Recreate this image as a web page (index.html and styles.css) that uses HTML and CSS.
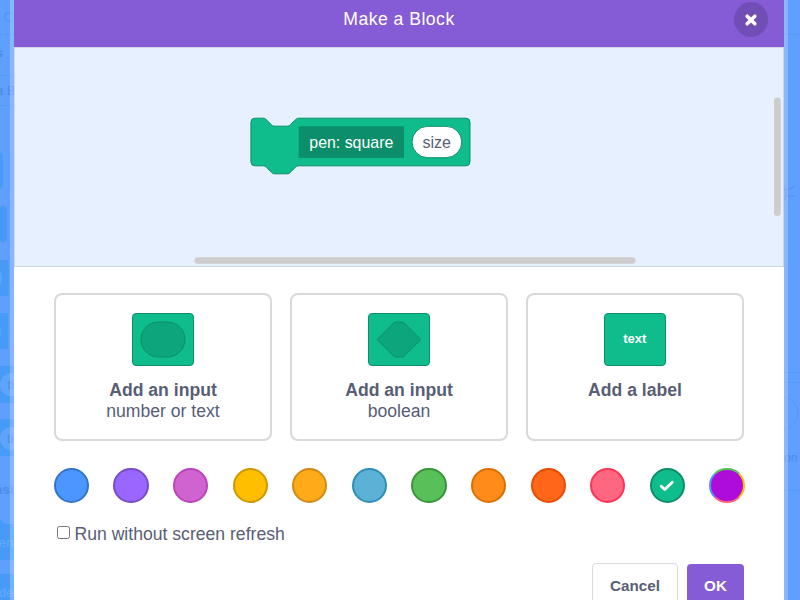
FILE: index.html
```
<!DOCTYPE html>
<html lang="en">
<head>
<meta charset="utf-8">
<title>Make a Block</title>
<link rel="stylesheet" href="styles.css">
</head>
<body>
<svg class="backdrop" width="800" height="600" viewBox="0 0 800 600" aria-hidden="true">
  <g class="dim-block">
    <path d="M-4 153H0Q3 153 3 157V185Q3 189 0 189H-4Z"/>
    <rect x="-20" y="206" width="27" height="36" rx="3"/>
    <rect x="-20" y="260" width="28.5" height="36" rx="3"/>
    <rect x="-20" y="313" width="28" height="36" rx="3"/>
    <rect x="-20" y="366" width="40" height="37"/>
    <rect x="-20" y="419" width="40" height="37"/>
    <path d="M0 519L5 524H20V560H0Z"/>
    <rect x="-20" y="574" width="40" height="30"/>
  </g>
  <g class="dim-input">
    <circle cx="-13" cy="278" r="15"/>
    <circle cx="-14" cy="331" r="15"/>
    <rect x="0" y="373" width="40" height="23" rx="11.5"/>
    <rect x="0" y="427" width="40" height="23" rx="11.5"/>
  </g>
  <g class="dim-line">
    <path d="M0 34.5H14M0 75.5H14M0 105.5H14M784 34.5H800M784 372.5H800M784 382.5H800M784 490.5H800"/>
    <circle cx="782" cy="413" r="16"/>
  </g>
  <path class="dim-whisker" d="M784 190Q790 190 795 186M786 196H795M784 187Q788 194 784 201"/>
  <g class="dim-text">
    <text class="faint" x="3.5" y="22" font-size="14">C</text>
    <text x="-4.2" y="57" font-size="13" font-weight="bold">s</text>
    <text x="-4" y="95" font-size="13">a B</text>
    <text x="7.5" y="389" font-size="13">ti</text>
    <text x="7" y="443" font-size="13">ti</text>
    <text x="-5.5" y="494" font-size="13" font-weight="bold">nsi</text>
    <text x="784" y="462" font-size="12">on</text>
  </g>
  <g class="dim-light">
    <text x="-1" y="547" font-size="13">en</text>
    <text x="-1" y="597" font-size="13">ded</text>
  </g>
</svg>

<main class="modal">
  <header class="header">
    <h1 class="title">Make a Block</h1>
    <button class="close" aria-label="Close">
      <svg width="14" height="14" viewBox="0 0 14 14"><path d="M3.2 3.2L10.8 10.8M10.8 3.2L3.2 10.8"/></svg>
    </button>
  </header>

  <section class="workspace">
    <svg class="canvas" width="768" height="218" viewBox="15 48 768 218">
      <path class="block" d="M250.9 122.2a4 4 0 0 1 4-4h8c2 0 3 1 4 2l4 4c1 1 2 2 4 2h12c2 0 3-1 4-2l4-4c1-1 2-2 4-2H466a4 4 0 0 1 4 4v39.6a4 4 0 0 1-4 4H298.9c-2 0-3 1-4 2l-4 4c-1 1-2 2-4 2h-12c-2 0-3-1-4-2l-4-4c-1-1-2-2-4-2h-8a4 4 0 0 1-4-4Z"/>
      <rect class="block-label" x="298.7" y="126.3" width="105.3" height="31.6"/>
      <text class="block-text" x="351.3" y="148" text-anchor="middle">pen: square</text>
      <rect class="block-input" x="412" y="126.3" width="49.8" height="31.4" rx="15.7"/>
      <text class="input-text" x="436.8" y="148" text-anchor="middle">size</text>
      <rect class="scrollbar" x="194.5" y="257.2" width="441" height="6.6" rx="3.3"/>
      <rect class="scrollbar" x="774" y="97.5" width="6.8" height="118.5" rx="3.4"/>
    </svg>
  </section>

  <section class="body">
    <div class="options">
      <button class="option">
        <svg class="icon" width="62" height="53" viewBox="0 0 62 53"><rect class="tile" x=".5" y=".5" width="61" height="52" rx="3.5"/><rect class="shape" x="9" y="9" width="44" height="35" rx="17.5"/></svg>
        <strong>Add an input</strong><span>number or text</span>
      </button>
      <button class="option">
        <svg class="icon" width="62" height="53" viewBox="0 0 62 53"><rect class="tile" x=".5" y=".5" width="61" height="52" rx="3.5"/><path class="shape" d="M9.2 26.5L26.7 9H35.3L52.8 26.5L35.3 44H26.7Z"/></svg>
        <strong>Add an input</strong><span>boolean</span>
      </button>
      <button class="option">
        <svg class="icon" width="62" height="53" viewBox="0 0 62 53"><rect class="tile" x=".5" y=".5" width="61" height="52" rx="3.5"/><text class="tile-text" x="30.7" y="30" text-anchor="middle">text</text></svg>
        <strong>Add a label</strong>
      </button>
    </div>

    <div class="colors">
      <span class="swatch blue"></span>
      <span class="swatch purple"></span>
      <span class="swatch pink"></span>
      <span class="swatch yellow"></span>
      <span class="swatch amber"></span>
      <span class="swatch sky"></span>
      <span class="swatch green"></span>
      <span class="swatch orange"></span>
      <span class="swatch red"></span>
      <span class="swatch rose"></span>
      <span class="swatch teal"><svg width="16" height="12" viewBox="0 0 16 12"><path d="M2.2 6.2L5.8 9.6L13.3 2.2"/></svg></span>
      <span class="swatch custom"></span>
    </div>

    <label class="refresh"><input type="checkbox"><span>Run without screen refresh</span></label>

    <div class="actions">
      <button class="cancel">Cancel</button>
      <button class="ok">OK</button>
    </div>
  </section>
</main>
</body>
</html>
```
FILE: styles.css
```
* { box-sizing: border-box; }

html, body { height: 100%; }

body {
  margin: 0;
  overflow: hidden;
  background: #5e9fff;
  color: #575e75;
  font-family: "Liberation Sans", Arial, sans-serif;
}

button { font-family: inherit; color: inherit; padding: 0; }

.backdrop { position: absolute; top: 0; left: 0; }
.dim-block { fill: #479af5; }
.dim-input { fill: #5fa4fb; }
.dim-line { fill: none; stroke: #5799f8; }
.dim-whisker { fill: none; stroke: #508fee; }
.dim-text { fill: #4c8ce8; }
.dim-text .faint { fill: #5495f4; }
.dim-light { fill: #63a9fb; }

.modal {
  position: relative;
  width: 778px;
  height: 600px;
  margin-left: 10px;
  border: solid rgba(255, 255, 255, .25);
  border-width: 0 4px;
  overflow: hidden;
}

.header {
  height: 47px;
  display: grid;
  grid-template-columns: 1fr auto 1fr;
  align-items: start;
  background: #855cd6;
  color: #fff;
}
.title {
  grid-column: 2;
  margin: 8px 0 0;
  font-size: 17.6px;
  line-height: 22px;
  font-weight: 400;
  letter-spacing: .48px;
}
.close {
  width: 34px;
  height: 35px;
  margin: 2px 16px 0 0;
  justify-self: end;
  display: grid;
  place-items: center;
  border: 0;
  border-radius: 50%;
  background: #714eb6;
}
.close path { fill: none; stroke: #fff; stroke-width: 3.6; stroke-linecap: round; }

.workspace {
  height: 220px;
  border: 1px solid #cfd6e2;
  background: #e6f0ff;
}
.canvas { display: block; }
.block { fill: #0fbd8c; stroke: #0b8e69; }
.block-label { fill: #0b8e69; }
.block-input { fill: #fff; stroke: #0b8e69; }
.block-text, .input-text { font-size: 16px; }
.block-text { fill: #fff; font-size: 15.9px; }
.input-text { fill: #575e75; }
.scrollbar { fill: #cdcdcd; }

.body { height: 333px; padding: 26px 40px 0; background: #fff; }

.options { display: grid; grid-template-columns: repeat(3, 218px); gap: 18px; }
.option {
  height: 148px;
  display: flex;
  flex-direction: column;
  align-items: center;
  padding-top: 18px;
  border: 2px solid #d9d9d9;
  border-radius: 8px;
  background: #fff;
  font-size: 17.6px;
  line-height: 21px;
}
.icon { margin-bottom: 14px; flex: none; }
.tile { fill: #0fbd8c; stroke: #0b8e69; }
.shape { fill: #0da57a; stroke: #0b8e69; }
.tile-text { fill: #fff; font-size: 13px; font-weight: bold; }

.colors { display: flex; justify-content: space-between; width: 690.8px; margin: 27px 0 0 -.2px; }
.swatch {
  width: 35.2px;
  height: 35.2px;
  display: grid;
  place-items: center;
  border: 2px solid;
  border-radius: 50%;
}
.swatch path { fill: none; stroke: #fff; stroke-width: 2.8; stroke-linecap: round; stroke-linejoin: round; }
.blue { background: #4c97ff; border-color: #3373cc; }
.purple { background: #9966ff; border-color: #774dcb; }
.pink { background: #cf63cf; border-color: #bd42bd; }
.yellow { background: #ffbf00; border-color: #cc9900; }
.amber { background: #ffab19; border-color: #cf8b17; }
.sky { background: #5cb1d6; border-color: #2e8eb8; }
.green { background: #59c059; border-color: #389438; }
.orange { background: #ff8c1a; border-color: #db6e00; }
.red { background: #ff661a; border-color: #e64d00; }
.rose { background: #ff6680; border-color: #ff3355; }
.teal { background: #0fbd8c; border-color: #0b8e69; }
.custom { background: #ad0cdb; border-color: #59c059 #ffbf00 #ff6680 #4c97ff; }

.refresh { display: flex; align-items: flex-start; margin-top: 20px; font-size: 17.6px; line-height: 22px; }
.refresh input { width: 13px; height: 13px; margin: 3px 4.5px 0 3px; }

.actions { display: flex; justify-content: flex-end; align-items: flex-start; gap: 9px; margin-top: 18px; }
.cancel, .ok { font-size: 15.2px; font-weight: bold; border-radius: 4px; height: 44px; }
.cancel { width: 86px; border: 1px solid #d9d9d9; background: #fff; }
.ok { width: 57px; height: 42px; margin-top: 1px; border: 0; background: #855cd6; color: #fff; }
```
